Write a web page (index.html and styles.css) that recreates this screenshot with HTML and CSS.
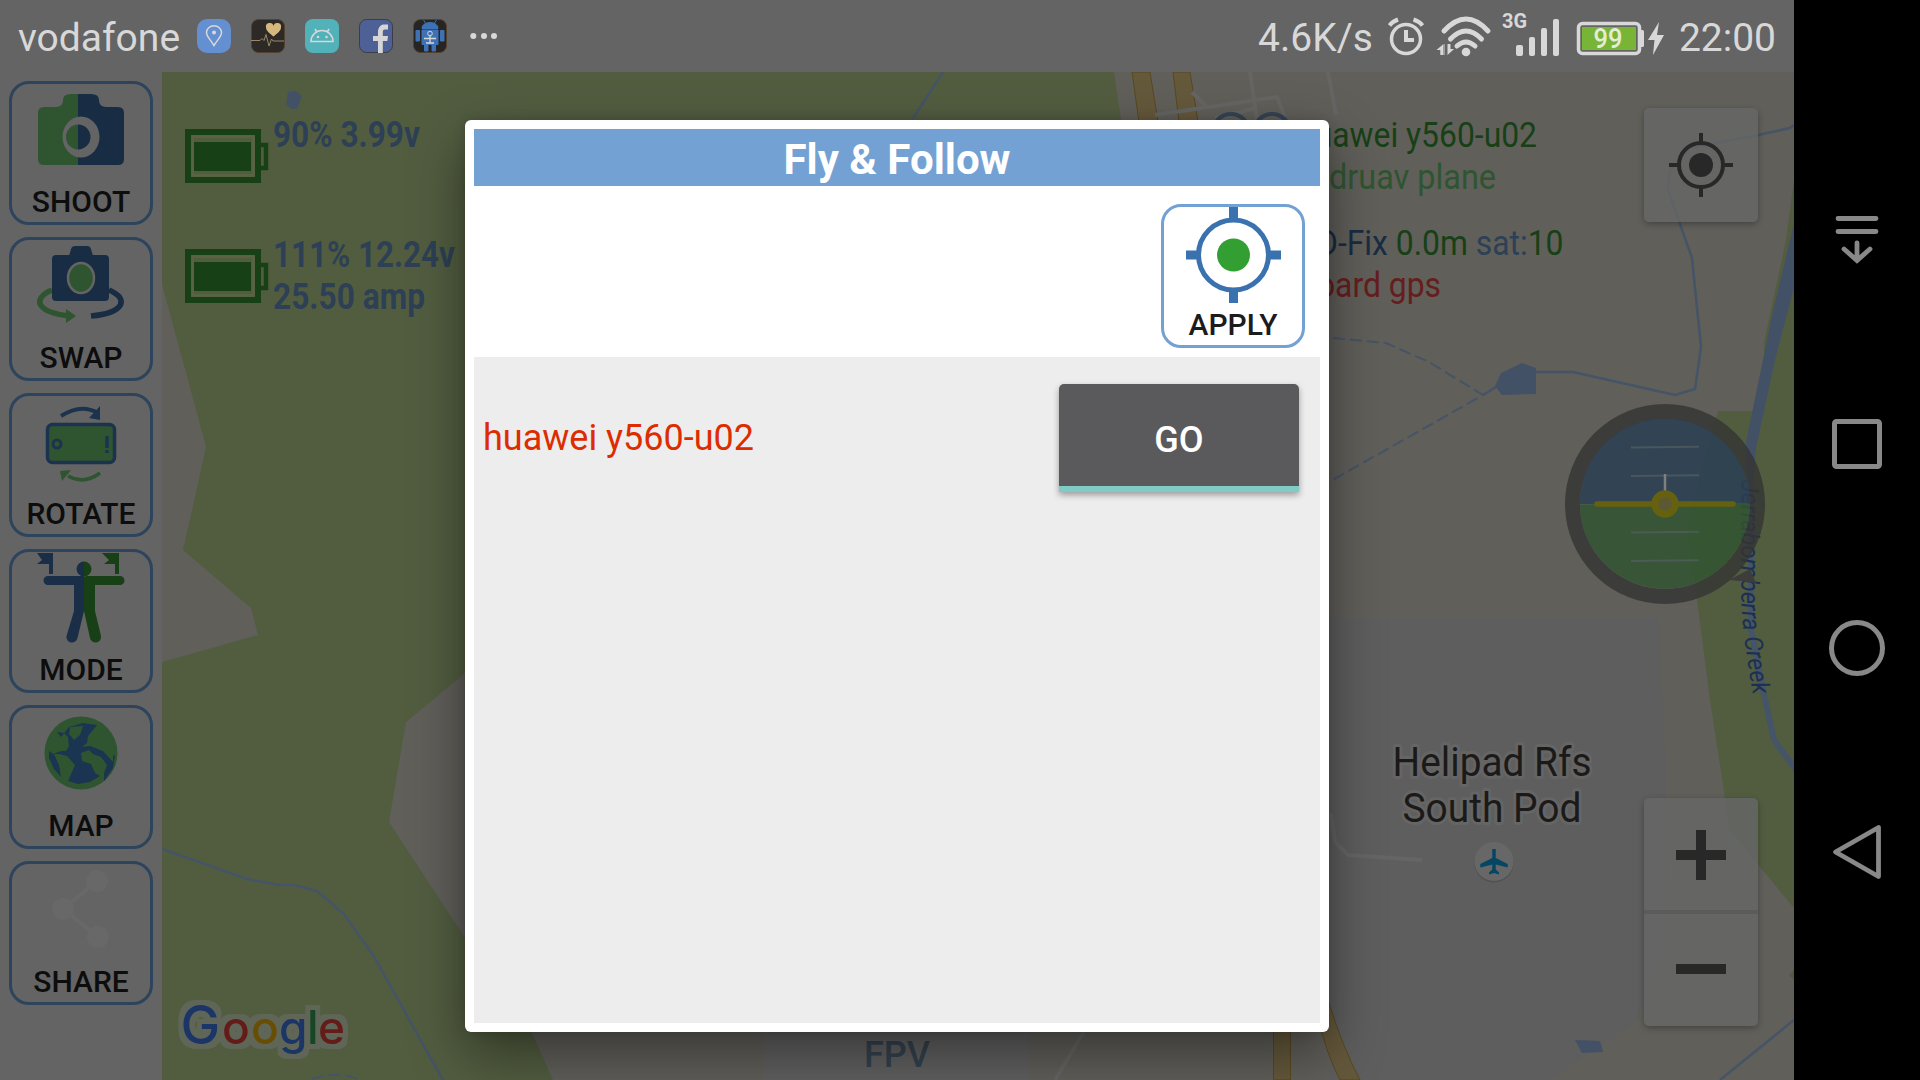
FILE: index.html
```html
<!DOCTYPE html>
<html lang="en">
<head>
<meta charset="utf-8">
<title>Fly &amp; Follow</title>
<link rel="stylesheet" href="styles.css">
</head>
<body>
<div class="device">
  <div class="screen">
    <header class="status">
      <span class="carrier">vodafone</span>
      <div class="notifs">
        <svg class="app" viewBox="0 0 34 34"><rect width="34" height="34" rx="10" fill="#648fd0"/><path d="M17 26.500C13 20 9.500 17.500 9.500 13.500a7.500 6.800 0 0 1 15 0C24.500 17.500 21 20 17 26.500z" fill="none" stroke="#d8d8d8" stroke-width="1.500"/><circle cx="17" cy="13.500" r="2" fill="#d8d8d8"/></svg>
        <svg class="app" viewBox="0 0 34 34"><rect x=".5" y=".5" width="33" height="33" rx="7" fill="#2c2926" stroke="#54422f"/><path d="M0 21.500h9l2-2 2 2 2-6 3 11.500 2.500-7 1.500 2h11" fill="none" stroke="#9c8a66" stroke-width="1"/><path d="M22.500 17.500C19 14.500 15 12 15 8.500a3.800 3.800 0 0 1 7.500-1.500 3.800 3.800 0 0 1 7.500 1.500c0 3.500-4 6-7.500 9z" fill="#d6b77d"/></svg>
        <svg class="app" viewBox="0 0 34 34"><rect width="34" height="34" rx="8" fill="#52b2ba"/><path d="M6 22.500a11 11 0 0 1 22 0zM10 10l2 3.500M24 10l-2 3.500" fill="none" stroke="#d8d8d8" stroke-width="1.600"/><circle cx="13" cy="18" r="1.300" fill="#d8d8d8"/><circle cx="21.500" cy="18" r="1.300" fill="#d8d8d8"/></svg>
        <svg class="app" viewBox="0 0 34 34"><rect x=".5" y=".5" width="33" height="33" rx="7" fill="#4d6196" stroke="#3d3b45"/><path d="M19 34V22h-5v-5h5v-4c0-5 3-7.500 6-7.500h4v5h-3c-1.800 0-2.200 1-2.200 2.500v4H29l-.7 5h-4.500v12z" fill="#d6d6d6"/></svg>
        <svg class="app" viewBox="0 0 34 34"><rect x=".5" y=".5" width="33" height="33" rx="7" fill="#272523" stroke="#54422f"/><path d="M9 9.500c0-8 16-8 16 0zM9 11h16v14.500H9zM3 11.500h3.500V22H3zM27.500 11.500H31V22h-3.500zM11.500 26h3.500v6h-3.500zM19 26h3.500v6H19zM10.500 1l2 3M23.500 1l-2 3" fill="#3f72b5" stroke="#3f72b5" stroke-width="1"/><circle cx="17" cy="14.500" r="2.300" fill="none" stroke="#d8d8d8"/><path d="M17 16.500V24M11 19.500h12M13 24h8" stroke="#d8d8d8" stroke-width="1.300" fill="none"/></svg>
        <svg class="more" viewBox="0 0 30 34"><g fill="#d8d8d8"><circle cx="6.300" cy="17" r="3"/><circle cx="17" cy="17" r="3"/><circle cx="27" cy="17" r="3"/></g></svg>
      </div>
      <div class="tray">
        <span class="speed">4.6K/s</span>
        <svg class="icons" viewBox="1384 8 285 50">
          <g fill="none" stroke="#d8d8d8">
            <circle cx="1406" cy="38" r="14.500" stroke-width="3.500"/>
            <path d="M1406 29v10h8" stroke-width="4"/>
            <path d="M1389.500 24.500q3-4 8.500-6M1413.500 18.500q6 2 9 6" stroke-width="4"/>
            <path d="M1444 30q22-24 44 0M1450.500 38q15.500-16 31 0M1457 45q9-8 18 0" stroke-width="5" stroke-linecap="round"/>
          </g>
          <g fill="#d8d8d8">
            <circle cx="1466" cy="51" r="4.300"/>
            <path d="M1436.500 49l7-6v11h-3.200v-5zM1444 43h.5v11h-.5zM1453.500 49h-.5l-5.500 5V43h3v5h3z"/>
            <rect x="1516" y="44" width="7" height="11" rx="2"/><rect x="1529" y="36" width="6" height="19" rx="2"/><rect x="1541" y="27" width="6" height="28" rx="2"/><rect x="1553" y="18" width="6" height="37" rx="2"/>
            <text x="1502" y="27" class="net" textLength="25" lengthAdjust="spacingAndGlyphs">3G</text>
            <rect x="1640" y="29" width="4" height="17" rx="1.500"/>
            <path d="M1659 21l-11 18h6.500l-1.500 15 11-20h-7z"/>
          </g>
          <rect x="1578.500" y="22.500" width="61" height="30" rx="4" fill="#646464" stroke="#d8d8d8" stroke-width="3.500"/>
          <rect x="1582" y="26" width="54" height="23" fill="#78b536"/>
          <text x="1593.500" y="47" class="pct" textLength="29" lengthAdjust="spacingAndGlyphs">99</text>
        </svg>
        <span class="clock">22:00</span>
      </div>
    </header>
    <main class="body">
      <aside class="tools">
        <button class="tool"><svg viewBox="0 0 143 100"><path d="M69 13v71H35q-6 0-6-6V32q0-6 6-6h12q7 0 7-7 0-6 8-6z" fill="#2f5530"/><path d="M69 13v71h40q6 0 6-6V32q0-6-6-6H97q-7 0-7-7 0-6-8-6z" fill="#182d44"/><ellipse cx="72" cy="56" rx="18.500" ry="20.500" fill="#646464"/><path d="M69 43.500v25a12 12.500 0 0 1 0-25z" fill="#2f5530"/><path d="M69 43.500a12.500 12.500 0 1 1 0 25z" fill="#182d44"/></svg><span>SHOOT</span></button>
        <button class="tool"><svg viewBox="0 0 143 100"><path d="M43 53C22 62 28 75 60 79" fill="none" stroke="#2f5530" stroke-width="5.500"/><path d="M57 72l10 7-10 7z" fill="#2f5530"/><path d="M100 53c21 9 15 23-18 26" fill="none" stroke="#182d44" stroke-width="5.500"/><rect x="43" y="18" width="57" height="46" rx="4" fill="#182d44"/><path d="M60 19l2-7q1-3 4-3h12q3 0 4 3l2 7z" fill="#182d44"/><ellipse cx="72" cy="41" rx="13" ry="15" fill="#2f5530" stroke="#646464" stroke-width="2.500"/></svg><span>SWAP</span></button>
        <button class="tool"><svg viewBox="0 0 143 100"><rect x="38.500" y="31.500" width="67" height="38" rx="5" fill="#2f5530" stroke="#1c3350" stroke-width="3.500"/><circle cx="48" cy="51" r="4" fill="none" stroke="#1c3350" stroke-width="3"/><path d="M98 43v12M98 57v3" stroke="#1c3350" stroke-width="3.500"/><path d="M52 23q20-13 37-3" fill="none" stroke="#1c3350" stroke-width="4"/><path d="M91 13v14l-11-2z" fill="#1c3350"/><path d="M91 80q-16 12-32 3" fill="none" stroke="#2f5530" stroke-width="3.500"/><path d="M51 78l11-1-9 11z" fill="#2f5530"/></svg><span>ROTATE</span></button>
        <button class="tool"><svg viewBox="0 0 143 100"><g fill="#1a2f47"><path d="M28 4h16v11H28l5-4z"/><path d="M40 4h4v21h-4z"/><path d="M75 12.500v15a7.500 7.500 0 0 1 0-15zM39 27h36v35l-6.500 27a5 5 0 0 1-11-2L65 62V36H39a4.500 4.500 0 0 1 0-9z"/></g><g fill="#174017"><path d="M93 4h17v11H95l5-4z"/><path d="M106 4h4v21h-4z"/><path d="M75 12.500v15a7.500 7.500 0 0 0 0-15zM75 27h36a4.500 4.500 0 0 1 0 9H86v26l6 25a5 5 0 0 1-11 2L75 62z"/></g></svg><span>MODE</span></button>
        <button class="tool"><svg viewBox="0 0 143 100"><circle cx="72" cy="48" r="36.500" fill="#2f5530"/><g fill="#1b3451"><path d="M52 32l8-10 14-4 14 2-9 11-1 7-5 4 8-1 13 5 10 11 0-7 2 1-2 12-9 13 0-8 3-8-6-8-8-3-4-4-8 3 1 8 9 3 4 9 0 0 5 3-10 6-12 2-10-3 4-9 3-7-8-9-8-2-5 0 5 11 2 12-7-8-5-11 0-7 4 3 8-3 5 0 3-5-1-9-4-4-7-1z"/></g><path d="M61 22l13-1-3 9-6 5-5-6z" fill="#2f5530"/></svg><span>MAP</span></button>
        <button class="tool"><svg viewBox="0 0 143 100"><g fill="#686868"><circle cx="88" cy="20" r="11"/><circle cx="54" cy="48" r="11"/><circle cx="89" cy="76" r="11"/></g><path d="M88 20L54 48l35 28" fill="none" stroke="#686868" stroke-width="4"/></svg><span>SHARE</span></button>
      </aside>
      <section class="mapwrap">
        <svg class="map" viewBox="162 72 1632 1008">
          <defs>
            <filter id="halo" x="-10%" y="-20%" width="120%" height="140%" color-interpolation-filters="sRGB">
              <feMorphology in="SourceAlpha" operator="dilate" radius="5" result="wide"/>
              <feFlood flood-color="#5f6657"/>
              <feComposite in2="wide" operator="in" result="edge"/>
              <feMerge><feMergeNode in="edge"/><feMergeNode in="SourceGraphic"/></feMerge>
            </filter>
          </defs>
          <rect x="162" y="72" width="1632" height="1008" fill="#605f5a"/>
          <path d="M162 72H1114L1121 120V600H520L466 672 434 699 406 722 389 822 465 938 531 1031 553 1080H162V662L258 635 251 608 183 550 206 447 188 380 177 340 162 284z" fill="#525d40"/>
          <path d="M1329 618h330l7 162-2 160-26 80-88 60H1329z" fill="#5e5e5e"/>
          <path d="M1794 180l-8 60-22 103v17l-11 51h-35l-6 20-25 96 10 73 13 100 15 98 5 32 30 37 34 41zM1794 970l-5 5 5 5z" fill="#525d40"/>
          <path d="M1794 223l-23 97-8 40-17 82v30h8l2-24 19-88 19-73z" fill="#425165"/>
          <g fill="none" stroke="#455467" stroke-width="2.500">
            <path d="M1751 465v165l12 60 11 50 22 30" stroke-width="6"/>
            <path d="M162 849l85 30 32 6h15l23 6 27 23 29 41 70 125M943 72l-31 48"/>
            <path d="M1483 395l13-8M1536 372h37l102 23 20-6 6-42-9-89-24-68 2-20 20-22 68-13 32-7 4-3M1794 1020l-74 60"/>
            <path d="M1333 338l53 5 43 19 54 33-154 87M312 1079q25-9 45 0" stroke-width="2" stroke-dasharray="12 5"/>
          </g>
          <path d="M1495 386l6-13 21-10 14 5v26l-34 1zM1575 1040l25 1 3 11-21 1zM288 92l8-1 6 5-5 13h-6l-5-5z" fill="#425165"/>
          <g fill="#65593c" stroke="#584920" stroke-width="1">
            <path d="M1132 72h18l8 50h-19zM1173 72h17l8 50h-19zM1273.500 1000h17v80h-17zM1316 1010l13-7q14 45 31 77h-20q-14-26-24-70z"/>
          </g>
          <g fill="none" stroke="#656564" stroke-width="4">
            <path d="M1155 115l122-18 8 20M1250 72l7 48M1328 72l8 43M1192 92l14 14M1215 118l42-10"/>
            <path d="M1331 813l4 29 13 13 74 5M1085 1030l-30 50" />
          </g>
          <g fill="none" stroke="#354455" stroke-width="4"><circle cx="1231" cy="132" r="18"/><circle cx="1272" cy="132" r="18"/></g>
          <path id="creek" d="M1741 480V600Q1743 640 1754 700" fill="none"/>
          <text class="creek"><textPath href="#creek" textLength="216" lengthAdjust="spacingAndGlyphs">Jerrabomberra Creek</textPath></text>
          <g class="place"><text x="1392.500" y="776" textLength="199" lengthAdjust="spacingAndGlyphs">Helipad Rfs</text><text x="1402.500" y="822" textLength="179" lengthAdjust="spacingAndGlyphs">South Pod</text></g>
          <circle cx="1494" cy="863" r="19.500" fill="#515151"/><circle cx="1494" cy="861.500" r="19.500" fill="#676767"/>
          <path d="M1492.300 849h3.400v9l12 6v3.500l-12-3v5l3.300 3v2l-5-1.500-5 1.500v-2l3.300-3v-5l-12 3V864l12-6z" fill="#044663"/>
          <text class="google" y="1044" filter="url(#halo)"><tspan x="180.500" class="g-blue" font-size="53">G</tspan><tspan x="222" class="g-red">o</tspan><tspan x="251" class="g-gold">o</tspan><tspan x="279" class="g-blue">g</tspan><tspan x="307" class="g-green">l</tspan><tspan x="318" class="g-red">e</tspan></text>
          <!-- attitude indicator -->
          <g>
            <path d="M1729 580q14 1 27 3l-6-14z" fill="#3d3d3b"/>
            <circle cx="1665" cy="504" r="92.500" fill="none" stroke="#353535" stroke-width="15" stroke-opacity=".82"/>
            <path d="M1580 504a85 85 0 0 1 170-1z" fill="#2a3e53" fill-opacity=".85"/>
            <path d="M1580 504.500a85 85 0 0 0 170-1.500z" fill="#315331" fill-opacity=".85"/>
            <path d="M1631 447.500l68-.8M1631 476l68-.8M1631 532.500l68-.8M1631 561l68-.8" stroke="#53605f" stroke-opacity=".7" stroke-width="2"/>
            <path d="M1665 474v18" stroke="#7d8080" stroke-width="2.500"/>
            <path d="M1597 504h136" stroke="#66610f" stroke-width="5.500" stroke-linecap="round"/>
            <circle cx="1665" cy="504" r="10.200" fill="#5c5834" stroke="#66610f" stroke-width="7"/>
          </g>
          <!-- telemetry -->
          <g id="bat"><path d="M188 132h70v48h-70z" fill="none" stroke="#174017" stroke-width="6"/><path d="M192.500 136.500h61v39h-61z" fill="none" stroke="#5a6444" stroke-width="2.500"/><rect x="194" y="142" width="57" height="29" fill="#174017"/><path d="M261 145h5v23h-5" fill="none" stroke="#174017" stroke-width="4.500"/></g>
          <use href="#bat" y="120"/>
          <g class="volt">
            <text x="273" y="146.500" textLength="147" lengthAdjust="spacingAndGlyphs">90% 3.99v</text>
            <text x="273" y="267" textLength="182" lengthAdjust="spacingAndGlyphs">111% 12.24v</text>
            <text x="273" y="309" textLength="152" lengthAdjust="spacingAndGlyphs">25.50 amp</text>
          </g>
          <g class="hud">
            <text transform="translate(1537 146.500) scale(.885 1)" fill="#174017">huawei y560-u02</text>
            <text transform="translate(1496 188.500) scale(.9 1)" fill="#2f5530">andruav plane</text>
            <text transform="translate(1563.500 254.500) scale(.885 1)" fill="#174017"><tspan fill="#182d44">3D-Fix</tspan> 0.0m <tspan fill="#2d4055">sat:</tspan>10</text>
            <text transform="translate(1441 296.500) scale(.885 1)" fill="#661d1d">board gps</text>
          </g>
        </svg>
        <div class="locate"><svg viewBox="0 0 114 114"><g fill="none" stroke="#282828" stroke-width="4"><circle cx="57" cy="57" r="22"/><path d="M57 25v9M57 80v9M25 57h9M80 57h9"/></g><circle cx="57" cy="57" r="12" fill="#282828"/></svg></div>
        <div class="zoom">
          <svg viewBox="0 0 114 114"><path d="M32 57h50M57 32v50" stroke="#282828" stroke-width="10"/></svg>
          <svg viewBox="0 0 114 114"><path d="M32 55h50" stroke="#282828" stroke-width="10"/></svg>
        </div>
        <div class="fpv">FPV</div>
      </section>
    </main>
    <div class="dialog">
      <h1>Fly &amp; Follow</h1>
      <div class="actions">
        <button class="apply"><svg viewBox="0 0 143 100"><g fill="none" stroke="#3a72b0"><circle cx="72.500" cy="51" r="35" stroke-width="5"/><path d="M72.500 3v15M72.500 84v15M25 51h14M106 51h14" stroke-width="9"/></g><circle cx="72.500" cy="51" r="16.500" fill="#339f33"/></svg><span>APPLY</span></button>
      </div>
      <div class="list">
        <div class="row"><span class="unit">huawei y560-u02</span><button class="go">GO</button></div>
      </div>
    </div>
  </div>
  <nav class="nav">
    <svg viewBox="0 0 126 204"><g fill="none" stroke="#888" stroke-width="4.800" stroke-linecap="round"><path d="M44 80.500h38M44 93.500h38M63 105v17M50 111l13 11.500 13-11.500"/></g></svg>
    <svg viewBox="0 0 126 204"><rect x="40.500" y="79.500" width="45" height="45" rx="2" fill="none" stroke="#888" stroke-width="5"/></svg>
    <svg viewBox="0 0 126 204"><circle cx="63" cy="102" r="25.500" fill="none" stroke="#888" stroke-width="5"/></svg>
    <svg viewBox="0 0 126 204"><path d="M84.500 77.500v49L41.500 102z" fill="none" stroke="#888" stroke-width="4.800" stroke-linejoin="round"/></svg>
  </nav>
</div>
</body>
</html>
```
FILE: styles.css
```css
* { box-sizing: border-box; }
body { margin: 0; background: #000; font-family: Roboto, sans-serif; }
button { font: inherit; border: 0; padding: 0; background: none; }
svg { display: block; }
.device { display: flex; width: 1920px; height: 1080px; overflow: hidden; }
.screen { position: relative; width: 1794px; height: 1080px; display: flex; flex-direction: column; background: #646464; }

.status { display: flex; align-items: center; height: 72px; padding: 0 18px; color: #d8d8d8; font-size: 39px; line-height: 72px; }
.carrier { width: 179px; white-space: nowrap; padding-top: 3px; }
.notifs { display: flex; gap: 20px; }
.app { width: 34px; height: 34px; }
.more { width: 30px; height: 34px; }
.tray { display: flex; align-items: center; margin-left: auto; padding-top: 4px; }
.icons { width: 285px; height: 50px; margin: -9px 10px 0 11px; }
.net { font-weight: 700; font-size: 21px; }
.pct { font-weight: 500; font-size: 27px; fill: #e4ecd8; }

.body { flex: 1; display: flex; }
.tools { width: 162px; padding: 9px 0 0 9px; display: flex; flex-direction: column; gap: 12px; }
.tool, .apply { display: flex; flex-direction: column; align-items: center; width: 144px; height: 144px; border: 3px solid #2e445c; border-radius: 20px; overflow: hidden; }
.tool svg, .apply svg { width: 143px; height: 100px; flex: none; margin: -3px 0 0 -2px; }
.tool span, .apply span { font-size: 30px; font-weight: 500; line-height: 36px; color: #0d0d0d; margin-top: 3px; }

.mapwrap { position: relative; flex: 1; height: 1008px; }
.map { width: 1632px; height: 1008px; }
.creek { font-size: 25px; font-style: italic; fill: #1b3052; }
.place { font-size: 41px; fill: #1b1a18; stroke: #656565; stroke-width: 6px; stroke-linejoin: round; paint-order: stroke; }
.google { font-family: Inter, sans-serif; font-size: 46px; font-weight: 500; }
.g-blue { fill: #1c3567; }
.g-red { fill: #631c17; }
.g-gold { fill: #684d04; }
.g-green { fill: #174626; }
.volt { font-size: 36px; font-weight: 700; fill: #2d4055; }
.hud { font-size: 36px; text-anchor: end; }
.locate, .zoom { position: absolute; left: 1482px; width: 114px; border-radius: 5px; background: rgba(102, 102, 102, .8); box-shadow: 0 2px 6px rgba(0, 0, 0, .3); }
.locate { top: 36px; height: 114px; }
.zoom { top: 726px; height: 228px; }
.zoom svg + svg { border-top: 4px solid #5b5b5a; margin-top: -2px; }
.fpv { position: absolute; left: 603px; bottom: 0; width: 264px; height: 52px; padding-top: 9px; background: #606060; color: #33424f; font-size: 36px; font-weight: 500; line-height: 36px; text-align: center; }

.dialog { position: absolute; left: 465px; top: 120px; width: 864px; height: 912px; padding: 9px; border-radius: 6px; background: #fff; display: flex; flex-direction: column; box-shadow: 0 22px 55px rgba(0, 0, 0, .42), 0 0 12px rgba(0, 0, 0, .15); }
.dialog h1 { margin: 0; height: 57px; background: #74a1d3; color: #fff; font-size: 42px; font-weight: 700; line-height: 61px; text-align: center; }
.actions { display: flex; justify-content: flex-end; height: 171px; padding: 18px 15px 0 0; }
.apply { border-color: #74a1d3; }
.apply span { color: #1c1c1c; }
.list { flex: 1; background: #ededed; padding: 27px 21px 0 9px; }
.row { display: flex; align-items: center; justify-content: space-between; height: 108px; }
.unit { font-size: 36px; color: #dd2c00; }
.go { width: 240px; height: 108px; border-bottom: 6px solid #80cbc4; border-radius: 5px 5px 0 0; background: #5a5a5c; color: #fff; font-size: 36px; font-weight: 500; box-shadow: 0 3px 6px rgba(0, 0, 0, .35); padding-top: 9px; }

.nav { width: 126px; background: #000; padding-top: 138px; display: flex; flex-direction: column; }
.nav svg { width: 126px; height: 204px; }
```
